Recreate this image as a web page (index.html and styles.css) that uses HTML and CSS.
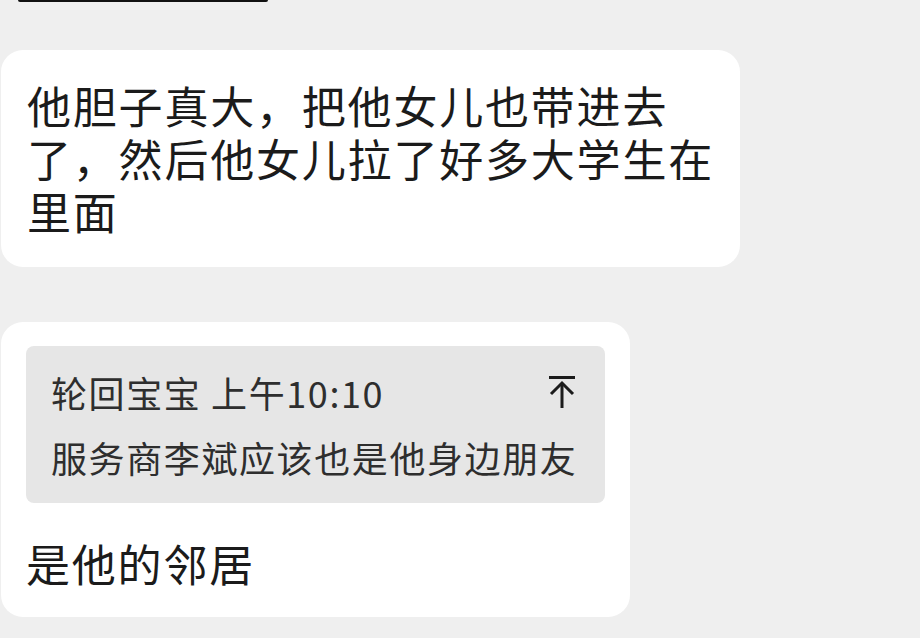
FILE: index.html
```html
<!DOCTYPE html>
<html lang="zh-CN">
<head>
    <meta charset="UTF-8">
    <meta name="viewport" content="width=device-width, initial-scale=1.0">
    <title>聊天</title>
    <link rel="stylesheet" href="styles.css">
</head>
<body>

    <div class="prev-edge"></div>

    <div class="chat">
        <div class="bubble first">
            <p class="msg">他胆子真大，把他女儿也带进去了，然后他女儿拉了好多大学生在里面</p>
        </div>

        <div class="bubble second">
            <div class="quote">
                <div class="quote-head">
                    <span>轮回宝宝 上午10:10</span>
                    <svg class="top-icon" width="30" height="34" viewBox="0 0 30 34" fill="none" stroke="#1b1b1b" stroke-width="3">
                        <path d="M2 2.5h26"/>
                        <path d="M15 8v25"/>
                        <path d="M4 19l11-11 11 11"/>
                    </svg>
                </div>
                <p class="quote-text">服务商李斌应该也是他身边朋友</p>
            </div>
            <p class="msg reply">是他的邻居</p>
        </div>
    </div>

</body>
</html>
```

FILE: styles.css
```css
body { margin: 0; background: #efefef; font-family: "Noto Sans CJK SC", "Noto Sans", sans-serif; color: #1b1b1b; height: 638px; overflow: hidden; }
p { margin: 0; }
.prev-edge { width: 250px; height: 2px; margin-left: 18px; background: #111; border-radius: 0 0 2px 2px; }
.chat { padding-top: 48px; }
.bubble { background: #fff; border-radius: 22px; margin-left: 1px; }
.first { width: 693px; padding: 29px 20px 29px 26px; }
.second { width: 579px; margin-top: 55px; padding: 24px 25px 27px 25px; }
.msg { font-size: 44px; line-height: 53px; letter-spacing: 1.8px; }
.quote { background: #e6e6e6; border-radius: 8px; padding: 21px 28px 21px 25px; color: #2e2e2e; font-size: 36px; letter-spacing: 1.6px; }
.quote-head { display: flex; justify-content: space-between; align-items: center; line-height: 50px; margin-bottom: 15px; }
.top-icon { display: block; }
.quote-text { line-height: 50px; white-space: nowrap; }
.reply { margin-top: 34px; }
```
